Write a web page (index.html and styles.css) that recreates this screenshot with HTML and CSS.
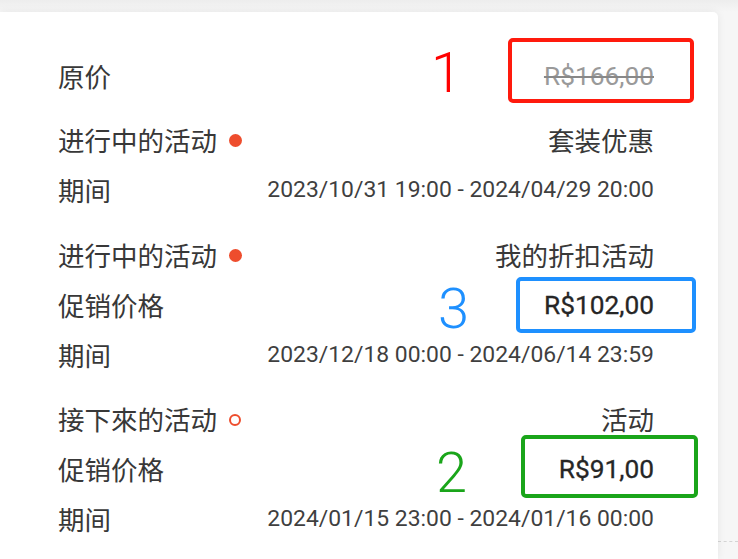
FILE: index.html
```html
<!DOCTYPE html>
<html lang="zh">
<head>
<meta charset="utf-8">
<title>促销价格</title>
<link rel="stylesheet" href="styles.css">
</head>
<body>
<div class="page">
  <div class="card">
    <div class="group">
      <div class="row">
        <span class="label">原价</span>
        <span class="price old">R$166,00</span>
      </div>
    </div>
    <div class="group">
      <div class="row">
        <span class="label">进行中的活动<i class="dot"></i></span>
        <span class="value">套装优惠</span>
      </div>
      <div class="row">
        <span class="label">期间</span>
        <span class="date">2023/10/31 19:00 - 2024/04/29 20:00</span>
      </div>
    </div>
    <div class="group">
      <div class="row">
        <span class="label">进行中的活动<i class="dot"></i></span>
        <span class="value">我的折扣活动</span>
      </div>
      <div class="row">
        <span class="label">促销价格</span>
        <span class="price">R$102,00</span>
      </div>
      <div class="row">
        <span class="label">期间</span>
        <span class="date">2023/12/18 00:00 - 2024/06/14 23:59</span>
      </div>
    </div>
    <div class="group">
      <div class="row">
        <span class="label">接下來的活动<i class="dot hollow"></i></span>
        <span class="value">活动</span>
      </div>
      <div class="row">
        <span class="label">促销价格</span>
        <span class="price">R$91,00</span>
      </div>
      <div class="row">
        <span class="label">期间</span>
        <span class="date">2024/01/15 23:00 - 2024/01/16 00:00</span>
      </div>
    </div>

    <div class="mark mark-red"></div>
    <div class="mark mark-blue"></div>
    <div class="mark mark-green"></div>
    <span class="num num-1">1</span>
    <span class="num num-3">3</span>
    <span class="num num-2">2</span>
  </div>
  <div class="side"><div class="dash"></div></div>
</div>
</body>
</html>
```
FILE: styles.css
```css
html, body {
  margin: 0;
  padding: 0;
}
body {
  background: #f3f3f3;
  font-family: Roboto, "Noto Sans CJK SC", sans-serif;
  color: #333;
  overflow: hidden;
}
.page {
  display: flex;
  padding-top: 12px;
  height: 559px;
  box-sizing: border-box;
  background: linear-gradient(#ededed, #f6f6f6 12px);
}
.card {
  position: relative;
  width: 718px;
  flex: none;
  background: #fff;
  border-radius: 0 5px 0 0;
  box-shadow: 0 0 8px rgba(0, 0, 0, 0.07);
  padding: 39px 64px 0 58px;
  box-sizing: border-box;
}
.group {
  display: flex;
  flex-direction: column;
}
.group + .group {
  margin-top: 14.5px;
}
.row {
  display: flex;
  justify-content: space-between;
  align-items: center;
  height: 50px;
}
.label {
  display: flex;
  align-items: center;
  gap: 12px;
  font-family: "Noto Sans CJK SC", sans-serif;
  font-size: 26.5px;
  color: #383838;
  line-height: 1;
}
.value {
  font-family: "Noto Sans CJK SC", sans-serif;
  font-size: 26.5px;
  color: #383838;
  line-height: 1;
}
.date {
  font-size: 22.9px;
  color: #3f3f3f;
  line-height: 1;
}
.price {
  font-size: 26.3px;
  font-weight: 400;
  color: #262626;
  -webkit-text-stroke: 0.3px #262626;
  line-height: 1;
}
.price.old {
  color: #9a9a9a;
  -webkit-text-stroke: 0;
  text-decoration: line-through;
  text-decoration-thickness: 2px;
  text-decoration-color: #888;
}
.dot {
  display: block;
  width: 13px;
  height: 13px;
  border-radius: 50%;
  background: #ee4d2d;
  box-sizing: border-box;
}
.dot.hollow {
  background: transparent;
  border: 2.5px solid #ee4d2d;
  width: 12px;
  height: 12px;
}
.mark {
  position: absolute;
  border: 4px solid;
  border-radius: 5px;
  box-sizing: border-box;
}
.mark-red {
  left: 508px;
  top: 26px;
  width: 186px;
  height: 65px;
  border-color: #ff1a0d;
}
.mark-blue {
  left: 516px;
  top: 265px;
  width: 180px;
  height: 56px;
  border-color: #1e90ff;
}
.mark-green {
  left: 521px;
  top: 423px;
  width: 177px;
  height: 63px;
  border-color: #1aa51a;
}
.num {
  position: absolute;
  font-family: Roboto, sans-serif;
  font-weight: 300;
  font-size: 56px;
  line-height: 1;
}
.num-1 {
  left: 431px;
  top: 33px;
  color: #ff0000;
}
.num-3 {
  left: 438px;
  top: 269px;
  color: #1e90ff;
}
.num-2 {
  left: 436px;
  top: 433px;
  color: #1aa51a;
}
.side {
  flex: 1;
}
.dash {
  margin-top: 529px;
  border-top: 1px dashed #d4d4d4;
}
```
